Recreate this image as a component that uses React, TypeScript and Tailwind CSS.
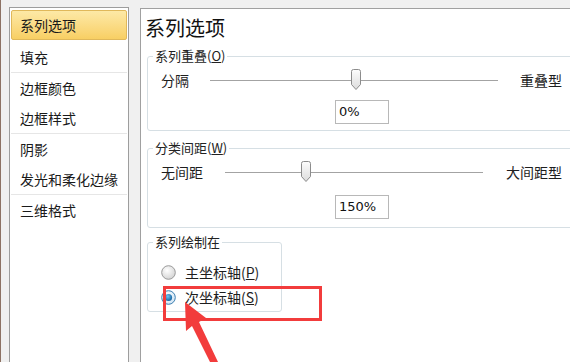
import React from 'react';

const font = { fontFamily: '"Noto Sans CJK SC", "Noto Sans", sans-serif' };

const navItems: { label: string; sepAfter?: boolean }[] = [
  { label: '系列选项' },
  { label: '填充', sepAfter: true },
  { label: '边框颜色' },
  { label: '边框样式', sepAfter: true },
  { label: '阴影' },
  { label: '发光和柔化边缘', sepAfter: true },
  { label: '三维格式' },
];

function Thumb() {
  return (
    <svg width="12" height="22" viewBox="0 0 12 22" className="block">
      <defs>
        <linearGradient id="thumbFill" x1="0" y1="0" x2="0" y2="1">
          <stop offset="0" stopColor="#fdfdfd" />
          <stop offset="1" stopColor="#dcdcdc" />
        </linearGradient>
      </defs>
      <path d="M1.5 2.5 Q1.5 0.5 3.5 0.5 H8.5 Q10.5 0.5 10.5 2.5 V15.5 L6 20.5 L1.5 15.5 Z" fill="url(#thumbFill)" stroke="#8c8c8c" />
    </svg>
  );
}

function Slider({ labelW, trackW, thumbAt, gap, left, right }: { labelW: number; trackW: number; thumbAt: number; gap: number; left: string; right: string }) {
  return (
    <div className="flex items-center h-[22px] pl-[13px] text-[14px] text-[#1e1e1e]">
      <span className="shrink-0" style={{ width: labelW }}>{left}</span>
      <div className="relative h-[22px] shrink-0" style={{ width: trackW }}>
        <div className="absolute left-0 right-0 top-[11px] h-px bg-[#a3a3a3]" />
        <div className="absolute top-0" style={{ left: thumbAt }}>
          <Thumb />
        </div>
      </div>
      <span className="shrink-0 whitespace-nowrap" style={{ marginLeft: gap }}>{right}</span>
    </div>
  );
}

function ValueBox({ value, top }: { value: string; top: number }) {
  return (
    <div
      className="ml-[187px] w-[54px] h-[24px] border border-[#b8b8b8] bg-white flex items-center pl-[3px] text-[13px] text-[#111]"
      style={{ marginTop: top, fontFamily: '"DejaVu Sans", sans-serif' }}
    >
      {value}
    </div>
  );
}

function Legend({ children }: { children: React.ReactNode }) {
  return <legend className="ml-[5px] px-[2px] text-[13px] leading-[18px] text-[#222]">{children}</legend>;
}

function Radio({ checked }: { checked?: boolean }) {
  return (
    <svg width="15" height="15" viewBox="0 0 15 15" className="block shrink-0">
      <defs>
        <radialGradient id={checked ? 'rOn' : 'rOff'} cx="0.4" cy="0.35" r="0.7">
          <stop offset="0" stopColor="#ffffff" />
          <stop offset="1" stopColor={checked ? '#cfe3f3' : '#d2d2d2'} />
        </radialGradient>
        <radialGradient id="dot" cx="0.4" cy="0.35" r="0.7">
          <stop offset="0" stopColor="#6fc3f2" />
          <stop offset="1" stopColor="#105c9a" />
        </radialGradient>
      </defs>
      <circle cx="7.5" cy="7.5" r="6.8" fill={`url(#${checked ? 'rOn' : 'rOff'})`} stroke={checked ? '#3c7fb1' : '#9a9a9a'} />
      {checked && <circle cx="7.5" cy="7.5" r="3.6" fill="url(#dot)" />}
    </svg>
  );
}

export default function App() {
  return (
    <div className="relative w-[570px] h-[362px] overflow-hidden bg-[#f0f0f0] flex" style={font}>
      {/* left edge */}
      <div className="w-[2px] h-full border-l border-[#8d7264]" />

      {/* nav list */}
      <div className="ml-[8px] mt-[7px] w-[120px] h-[400px] shrink-0 bg-white border border-[#9d9d9d] pt-[2px] px-[1px]">
        {navItems.map((item, i) => (
          <React.Fragment key={item.label}>
            <div
              className={
                i === 0
                  ? 'h-[30px] flex items-center pl-[8px] text-[14px] text-[#1a1a1a] rounded-[2px] border border-[#e0b85a] bg-gradient-to-b from-[#fde9a6] to-[#f8cf63]'
                  : 'h-[30px] flex items-center pl-[9px] text-[14px] text-[#1a1a1a]'
              }
            >
              {item.label}
            </div>
            {i === 0 && <div className="h-[2px]" />}
            {item.sepAfter && <div className="h-px bg-[#e6e6e6]" />}
          </React.Fragment>
        ))}
      </div>

      {/* options panel */}
      <div className="ml-[11px] mt-[8px] w-[440px] h-[400px] shrink-0 bg-white border-l border-t border-[#a0a0a0] pt-[5px]">
        <div className="pl-[4px] text-[20px] leading-[28px] text-[#111]">系列选项</div>

        <fieldset className="mt-[5px] ml-[6px] w-[440px] border border-[#d6dfe4] rounded-[3px] pb-[6px]">
          <Legend>
            系列重叠(<span className="underline">O</span>)
          </Legend>
          <div className="mt-[4px]">
            <Slider labelW={49} trackW={288} thumbAt={140} gap={22} left="分隔" right="重叠型" />
          </div>
          <ValueBox value="0%" top={9} />
        </fieldset>

        <fieldset className="mt-[8px] ml-[6px] w-[440px] border border-[#d6dfe4] rounded-[3px] pb-[8px]">
          <Legend>
            分类间距(<span className="underline">W</span>)
          </Legend>
          <div className="mt-[4px]">
            <Slider labelW={64} trackW={258} thumbAt={75} gap={23} left="无间距" right="大间距型" />
          </div>
          <ValueBox value="150%" top={12} />
        </fieldset>

        <fieldset className="mt-[5px] ml-[6px] w-[135px] border border-[#d6dfe4] rounded-[3px] pb-[5px]">
          <Legend>系列绘制在</Legend>
          <div className="mt-[13px] pl-[13px] flex flex-col gap-[8px] text-[14px] text-[#1e1e1e]">
            <div className="flex items-center gap-[9px] h-[17px]">
              <Radio />
              <span>
                主坐标轴(<span className="underline">P</span>)
              </span>
            </div>
            <div className="flex items-center gap-[9px] h-[17px]">
              <Radio checked />
              <span>
                次坐标轴(<span className="underline">S</span>)
              </span>
            </div>
          </div>
        </fieldset>
      </div>

      {/* annotation box */}
      <div className="absolute left-[163px] top-[286px] w-[159px] h-[35px] border-[3px] border-[#f23c3c]" />

      {/* annotation arrow */}
      <svg className="absolute left-0 top-0" width="570" height="362" viewBox="0 0 570 362">
        <polygon points="185,302 206,318 199,322 218,362 210,362 192,326 186,331" fill="#f23c3c" />
      </svg>
    </div>
  );
}
